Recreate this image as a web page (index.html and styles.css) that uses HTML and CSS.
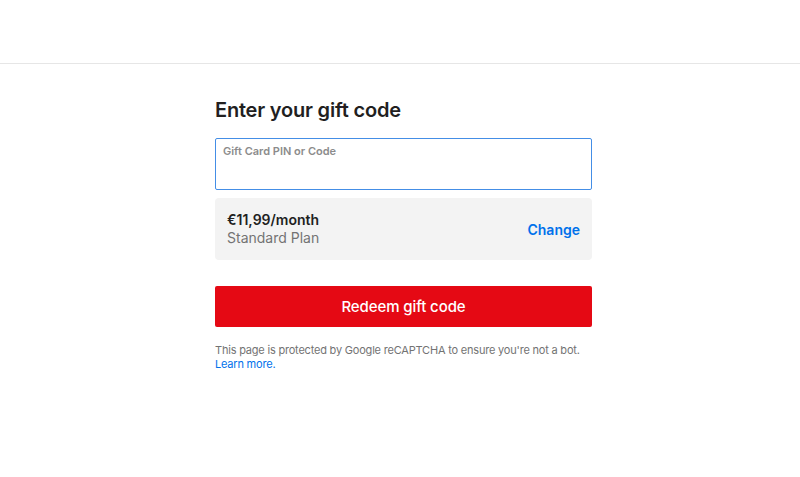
FILE: index.html
```html
<!DOCTYPE html>
<html lang="en">
<head>
<meta charset="utf-8">
<title>Enter your gift code</title>
<link rel="stylesheet" href="styles.css">
</head>
<body>
<header class="top"></header>
<main class="content">
  <h1 class="title">Enter your gift code</h1>
  <label class="field">
    <span class="field-label">Gift Card PIN or Code</span>
    <input class="field-input" type="text">
  </label>
  <div class="plan">
    <div class="plan-info">
      <div class="plan-price">€11,99/month</div>
      <div class="plan-name">Standard Plan</div>
    </div>
    <a class="plan-change" href="#">Change</a>
  </div>
  <button class="redeem" type="button">Redeem gift code</button>
  <p class="note">This page is protected by Google reCAPTCHA to ensure you're not a bot.<br><a class="note-link" href="#">Learn more.</a></p>
</main>
</body>
</html>
```
FILE: styles.css
```css
* { box-sizing: border-box; }
html, body { margin: 0; padding: 0; background: #fff; }
body {
  font-family: Inter, "Noto Sans", "Liberation Sans", sans-serif;
  color: #221f1f;
}
.top {
  height: 64px;
  border-bottom: 1px solid #e6e6e6;
}
.content {
  width: 377px;
  margin-left: calc(50% - 185px);
  padding-top: 34px;
}
.title {
  margin: 0 0 16px;
  font-size: 20px;
  line-height: 24px;
  font-weight: 600;
  letter-spacing: -0.2px;
  color: #221f1f;
}
.field {
  display: flex;
  flex-direction: column;
  height: 52px;
  border: 1px solid #448ee6;
  border-radius: 2px;
  padding: 6px 7px 0;
  margin-bottom: 8px;
}
.field-label {
  font-size: 11px;
  line-height: 13px;
  font-weight: 600;
  color: #8c8c8c;
}
.field-input {
  border: 0;
  outline: 0;
  padding: 0;
  font: inherit;
  background: transparent;
  height: 24px;
}
.plan {
  display: flex;
  align-items: center;
  justify-content: space-between;
  height: 62px;
  background: #f3f3f3;
  border-radius: 4px;
  padding: 0 12px;
  margin-bottom: 26px;
}
.plan-price {
  font-size: 14px;
  line-height: 18px;
  font-weight: 600;
  color: #221f1f;
}
.plan-name {
  font-size: 14px;
  line-height: 18px;
  color: #737373;
}
.plan-change {
  font-size: 14px;
  font-weight: 600;
  color: #0071eb;
  text-decoration: none;
}
.redeem {
  display: block;
  width: 100%;
  height: 41px;
  border: 0;
  border-radius: 2px;
  background: #e50914;
  color: #fff;
  font-family: inherit;
  font-size: 15px;
  font-weight: 500;
  letter-spacing: -0.1px;
  margin: 0 0 16px;
}
.note {
  margin: 0;
  font-size: 11px;
  line-height: 14px;
  letter-spacing: -0.2px;
  color: #737373;
  white-space: nowrap;
}
.note-link {
  color: #0071eb;
  text-decoration: none;
}
```
